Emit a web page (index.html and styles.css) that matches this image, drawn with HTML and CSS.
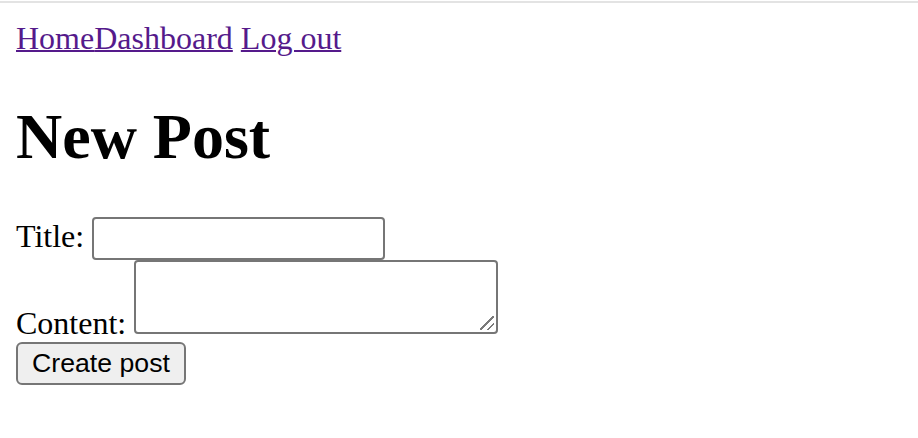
FILE: index.html
```html
<!DOCTYPE html>
<html>
<head>
<meta charset="utf-8">
<link rel="stylesheet" href="styles.css">
</head>
<body>
<div class="rule"></div>
<div class="page">
  <nav class="nav"><a class="link" href="#">Home</a><a class="link" href="#">Dashboard</a> <a class="link" href="#">Log out</a></nav>
  <h1 class="title">New Post</h1>
  <form class="form">
    <label class="label">Title: <input class="input" type="text"></label><br>
    <label class="label">Content: <textarea class="textarea"></textarea></label><br>
    <button class="button" type="button">Create post</button>
  </form>
</div>
</body>
</html>
```
FILE: styles.css
```css
html, body {
  margin: 0;
  padding: 0;
  background: #ffffff;
}
body {
  font-family: "Liberation Serif", "Times New Roman", serif;
  font-size: 32px;
  color: #000000;
}
.rule {
  height: 2px;
  margin-top: 1px;
  background: #e3e3e3;
}
.page {
  padding: 1px 16px 16px;
}
.nav {
  margin-top: 16px;
}
.link {
  color: #551a8b;
  text-decoration: underline;
  text-decoration-thickness: 2px;
}
.title {
  font-size: 64px;
  font-weight: bold;
  margin: 43px 0;
}
.form {
  margin: 0;
}
.label {
  font-size: 32px;
}
.input {
  box-sizing: border-box;
  width: 293px;
  height: 43px;
  border: 2px solid #767676;
  border-radius: 4px;
  padding: 2px 4px;
  font-family: "Liberation Sans", Arial, sans-serif;
  font-size: 26.67px;
  background: #ffffff;
  margin: 0;
}
.textarea {
  box-sizing: border-box;
  width: 364px;
  height: 74px;
  border: 2px solid #767676;
  border-radius: 4px;
  padding: 4px;
  font-family: "Liberation Mono", monospace;
  font-size: 26.67px;
  background-color: #ffffff;
  background-image: linear-gradient(135deg, transparent 46%, #7a7a7a 46%, #7a7a7a 56%, transparent 56%, transparent 72%, #7a7a7a 72%, #7a7a7a 82%, transparent 82%);
  background-size: 14px 14px;
  background-position: right 2px bottom 2px;
  background-repeat: no-repeat;
  resize: none;
  margin: 0;
  vertical-align: baseline;
}
.button {
  box-sizing: border-box;
  width: 170px;
  height: 43px;
  border: 2px solid #767676;
  border-radius: 6px;
  background: #efefef;
  padding: 2px 12px;
  font-family: "Liberation Sans", Arial, sans-serif;
  font-size: 26.67px;
  color: #000000;
  margin: 0;
}
```
